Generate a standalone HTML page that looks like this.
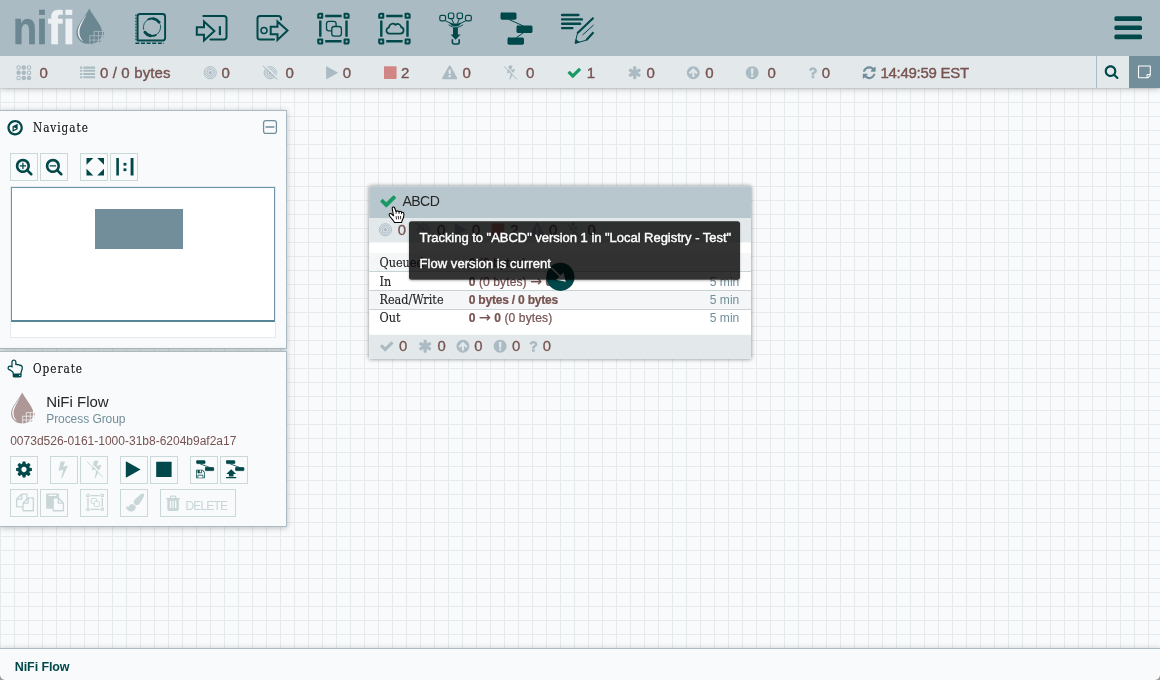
<!DOCTYPE html>
<html lang="en">
<head>
<meta charset="utf-8">
<title>NiFi Flow</title>
<style>
*{box-sizing:border-box;margin:0;padding:0}
html,body{width:1160px;height:680px;overflow:hidden}
body{position:relative;font-family:"Liberation Sans",sans-serif;background:#f9fafb;color:#262626;font-size:13px}
.abs{position:absolute}
#canvas{position:absolute;left:0;top:88px;width:1160px;height:592px;background-color:#f9fafb;
 background-image:linear-gradient(to right,#e5ebed 1px,transparent 1px),linear-gradient(to bottom,#e5ebed 1px,transparent 1px);
 background-size:14px 14px;background-position:0 0;overflow:hidden}
#header{position:absolute;left:0;top:0;width:1160px;height:56px;background:#aabbc3;z-index:6}
#status{position:absolute;left:0;top:56px;width:1160px;height:32px;background:#e3e8eb;box-shadow:0 1px 6px rgba(0,0,0,.25);z-index:5}
#status .v{position:absolute;top:0;height:32px;line-height:33px;font-size:15px;color:#775351;white-space:nowrap;-webkit-text-stroke:.38px #775351}
#status svg{position:absolute;overflow:visible}
#crumbs{position:absolute;left:0;top:648px;width:1160px;height:32px;background:rgba(249,250,251,.97);border-top:1px solid #aabbc3;box-shadow:0 1px 6px rgba(0,0,0,.25);z-index:5}
#crumbs span{position:absolute;left:14.800px;top:0;line-height:36px;font-size:12.500px;font-weight:bold;color:#004849;letter-spacing:-.1px;white-space:nowrap}
.panel{position:absolute;left:0;width:287px;background:rgba(249,250,251,.97);border:1px solid #aabbc3;border-left:none;box-shadow:0 1px 6px rgba(0,0,0,.25);z-index:4}
.ptitle{position:absolute;left:32px;font-family:"Liberation Serif","DejaVu Serif",serif;font-size:13px;color:#262626;letter-spacing:.6px}

.btn{position:absolute;width:28px;height:28px;border:1px solid #cbd8d8;background:rgba(249,250,251,1)}
.pt{position:absolute;left:32.700px;font-family:"DejaVu Serif","Liberation Serif",serif;font-size:12px;color:#262626;letter-spacing:1.100px;white-space:nowrap;line-height:14px;text-shadow:0 0 .5px rgba(38,38,38,.6);display:inline-block;transform:scale(.875,1);transform-origin:0 11.150px}
.psvg{position:absolute;left:0;top:0;overflow:visible}
.in{position:absolute;left:0;top:-1px;width:287px;height:100%}

#tip{position:absolute;left:409px;top:221.200px;width:331px;height:58.200px;z-index:8;color:#fff;font-size:13px;padding:9px 0 0 10.500px;-webkit-text-stroke:.4px #fff}
#tip div{height:25.600px;line-height:15px;white-space:nowrap;letter-spacing:-.03px}
#root{position:absolute;left:0;top:0;width:1160px;height:680px;will-change:transform}
</style>
</head>
<body><div id="root">
<div id="canvas"></div>
<svg id="pgsvg" class="abs" style="left:0;top:88px;z-index:1;overflow:hidden" width="1160" height="560" viewBox="0 88 1160 560">
<defs><filter id="ds" x="-10%" y="-10%" width="120%" height="125%"><feGaussianBlur in="SourceAlpha" stdDeviation="2.2"/><feOffset dx="0" dy=".45"/><feComponentTransfer><feFuncA type="linear" slope=".5"/></feComponentTransfer><feMerge><feMergeNode/><feMergeNode in="SourceGraphic"/></feMerge></filter></defs>
<g transform="translate(369.200 186.250) scale(1.00474 1.004)" font-family="Liberation Sans, sans-serif">
<rect x="0" y="0" width="380" height="172" fill="#ffffff" filter="url(#ds)"/>
<rect x="0" y="0" width="380" height="32" fill="#b8c6cd"/>
<rect x="0" y="32" width="380" height="24" fill="#e3e8eb"/>
<rect x="0" y="66.300" width="380" height="18.500" fill="#f4f6f7"/><rect x="0" y="104.330" width="380" height="18.300" fill="#f4f6f7"/>
<rect x="0" y="84.410" width="380" height=".996" fill="#c7d2d7"/><rect x="0" y="103.340" width="380" height=".996" fill="#c7d2d7"/><rect x="0" y="122.260" width="380" height=".996" fill="#c7d2d7"/>
<rect x="0" y="148" width="380" height="24" fill="#e3e8eb"/>
<g fill="#1a9964"><path d="M26.59 11.5C26.59 11.25 26.49 11 26.31 10.82L24.95 9.47C24.77 9.29 24.52 9.19 24.27 9.19C24.02 9.19 23.77 9.29 23.59 9.47L17.04 16.03L14.11 13.08C13.93 12.9 13.68 12.8 13.43 12.8C13.18 12.8 12.93 12.9 12.75 13.08L11.39 14.44C11.21 14.62 11.11 14.87 11.11 15.12C11.11 15.37 11.21 15.62 11.39 15.8L15 19.42L16.36 20.77C16.54 20.95 16.79 21.05 17.04 21.05C17.29 21.05 17.54 20.95 17.72 20.77L19.08 19.42L26.31 12.18C26.49 12 26.59 11.75 26.59 11.5Z"/></g>
<text x="33.200" y="20" font-size="14" fill="#262626" letter-spacing="-.6">ABCD</text>
<!-- contents -->
<g fill="none" stroke="#a3b6bf" stroke-width=".8"><circle cx="16.100" cy="43.400" r="6.100"/><circle cx="16.100" cy="43.400" r="4.600"/><circle cx="16.100" cy="43.400" r="3.100"/><circle cx="53.900" cy="43.400" r="6.100"/><circle cx="53.900" cy="43.400" r="4.600"/><circle cx="53.900" cy="43.400" r="3.100"/><path d="M46.400 36.600L60.800 50.200" stroke-width="1"/></g>
<g fill="#aabbc3"><circle cx="16.100" cy="43.400" r="1.750"/><circle cx="53.900" cy="43.400" r="1.750"/>
<path d="M96.8 43.66C97.05 43.52 97.05 43.28 96.8 43.14L85.68 36.96C85.42 36.82 85.21 36.95 85.21 37.24L85.21 49.56C85.21 49.85 85.42 49.98 85.68 49.84Z"/><path d="M168.27 47.65C168.27 47.8 168.15 47.92 168 47.92L166.4 47.92C166.25 47.92 166.13 47.8 166.13 47.65L166.13 46.05C166.13 45.9 166.25 45.78 166.4 45.78L168 45.78C168.15 45.78 168.27 45.9 168.27 46.05L168.27 47.65ZM168.25 44.51C168.25 44.62 168.12 44.71 167.97 44.71L166.42 44.71C166.26 44.71 166.14 44.62 166.14 44.51L165.99 40.69C165.99 40.64 166.02 40.56 166.08 40.51C166.13 40.47 166.2 40.42 166.28 40.42L168.12 40.42C168.2 40.42 168.27 40.47 168.32 40.51C168.38 40.56 168.41 40.62 168.41 40.67ZM168.14 36.7C167.95 36.35 167.59 36.14 167.2 36.14C166.81 36.14 166.45 36.35 166.26 36.7L159.83 48.48C159.65 48.81 159.66 49.21 159.85 49.54C160.04 49.86 160.39 50.06 160.77 50.06L173.63 50.06C174.01 50.06 174.36 49.86 174.55 49.54C174.74 49.21 174.75 48.81 174.57 48.48Z"/>
<path d="M207.38 39.89C207.3 39.81 207.2 39.76 207.09 39.76C207.05 39.76 207.02 39.77 206.98 39.78L203.56 40.63L205.04 36.62C205.06 36.57 205.08 36.52 205.08 36.47C205.08 36.27 204.91 36.1 204.69 36.1L204.69 36.1L201.85 36.1C201.67 36.1 201.52 36.22 201.47 36.38L199.73 43.52C199.71 43.64 199.74 43.77 199.85 43.85C199.92 43.91 200.02 43.95 200.12 43.95C200.15 43.95 200.18 43.95 200.22 43.94L203.73 43.07L202.03 50.06C201.98 50.24 202.1 50.42 202.29 50.48C202.33 50.49 202.37 50.5 202.41 50.5C202.56 50.5 202.7 50.41 202.77 50.28L207.44 40.27C207.5 40.14 207.48 40 207.38 39.89Z"/><path d="M197.700 36.100L210.600 49.300" stroke="#e3e8eb" stroke-width="1.300" fill="none"/><path d="M196.700 37L209.600 50.200" stroke="#aabbc3" stroke-width="1" fill="none"/>
</g>
<rect x="122" y="37.100" width="12.400" height="12.600" rx=".8" fill="#d18686"/>
<g font-size="14.800" fill="#775351" stroke="#775351" stroke-width=".3">
<text x="28.400" y="48.700">0</text><text x="67.400" y="48.700">0</text><text x="102.300" y="48.700">0</text><text x="140.300" y="48.700">2</text><text x="178.900" y="48.700">0</text><text x="217.400" y="48.700">0</text>
<text x="29.700" y="164.200">0</text><text x="68" y="164.200">0</text><text x="104.600" y="164.200">0</text><text x="142.100" y="164.200">0</text><text x="172.800" y="164.200">0</text>
</g>
<g fill="#aabbc3"><path d="M23.94 156.47C23.94 156.26 23.85 156.05 23.7 155.9L22.56 154.76C22.41 154.61 22.2 154.53 22 154.53C21.79 154.53 21.58 154.61 21.43 154.76L15.93 160.26L13.47 157.79C13.32 157.64 13.11 157.56 12.9 157.56C12.7 157.56 12.49 157.64 12.34 157.79L11.2 158.93C11.05 159.08 10.96 159.29 10.96 159.5C10.96 159.71 11.05 159.92 11.2 160.07L14.23 163.1L15.37 164.24C15.52 164.39 15.73 164.47 15.93 164.47C16.14 164.47 16.35 164.39 16.5 164.24L17.64 163.1L23.7 157.04C23.85 156.89 23.94 156.68 23.94 156.47Z"/><path d="M61.14 160.69L58.91 159.4L61.14 158.11C61.65 157.82 61.83 157.16 61.53 156.65L61 155.73C60.71 155.21 60.04 155.04 59.53 155.33L57.31 156.61L57.31 154.04C57.31 153.46 56.82 152.97 56.24 152.97L55.16 152.97C54.58 152.97 54.09 153.46 54.09 154.04L54.09 156.61L51.87 155.33C51.36 155.04 50.69 155.21 50.4 155.73L49.87 156.65C49.57 157.16 49.75 157.82 50.26 158.11L52.49 159.4L50.26 160.69C49.75 160.98 49.57 161.64 49.87 162.15L50.4 163.07C50.69 163.59 51.36 163.76 51.87 163.47L54.09 162.19L54.09 164.76C54.09 165.34 54.58 165.83 55.16 165.83L56.24 165.83C56.82 165.83 57.31 165.34 57.31 164.76L57.31 162.19L59.53 163.47C60.04 163.76 60.71 163.59 61 163.07L61.53 162.15C61.83 161.64 61.65 160.98 61.14 160.69Z"/><path d="M97.62 159.39C97.62 159.53 97.57 159.67 97.47 159.77L96.71 160.53C96.61 160.63 96.47 160.69 96.33 160.69C96.19 160.69 96.05 160.63 95.95 160.53L94.37 158.95L94.37 163.15C94.37 163.44 94.13 163.69 93.84 163.69L92.76 163.69C92.47 163.69 92.23 163.44 92.23 163.15L92.23 158.95L90.65 160.53C90.55 160.63 90.41 160.68 90.27 160.68C90.13 160.68 89.99 160.63 89.89 160.53L89.13 159.77C89.03 159.67 88.98 159.53 88.98 159.39C88.98 159.25 89.03 159.12 89.13 159.01L92.16 155.98L92.92 155.22C93.02 155.12 93.16 155.07 93.3 155.07C93.44 155.07 93.58 155.12 93.68 155.22L94.44 155.98L97.47 159.01C97.57 159.12 97.62 159.25 97.62 159.39ZM99.73 159.4C99.73 155.85 96.85 152.97 93.3 152.97C89.75 152.97 86.87 155.85 86.87 159.4C86.87 162.95 89.75 165.83 93.3 165.83C96.85 165.83 99.73 162.95 99.73 159.4Z"/><path d="M130.3 152.97C126.75 152.97 123.87 155.85 123.87 159.4C123.87 162.95 126.75 165.83 130.3 165.83C133.85 165.83 136.73 162.95 136.73 159.4C136.73 155.85 133.85 152.97 130.3 152.97ZM131.37 163.41C131.37 163.56 131.25 163.69 131.11 163.69L129.5 163.69C129.35 163.69 129.23 163.56 129.23 163.41L129.23 161.82C129.23 161.67 129.35 161.54 129.5 161.54L131.11 161.54C131.25 161.54 131.37 161.67 131.37 161.82ZM131.35 160.53C131.35 160.65 131.22 160.74 131.07 160.74L129.52 160.74C129.36 160.74 129.24 160.65 129.24 160.53L129.09 155.33C129.09 155.27 129.12 155.21 129.18 155.18C129.23 155.14 129.3 155.11 129.38 155.11L131.22 155.11C131.3 155.11 131.37 155.14 131.42 155.18C131.48 155.21 131.51 155.27 131.51 155.33Z"/><path d="M164.75 162.57C164.75 162.39 164.59 162.23 164.41 162.23L162.36 162.23C162.17 162.23 162.02 162.39 162.02 162.57L162.02 164.62C162.02 164.81 162.17 164.96 162.36 164.96L164.41 164.96C164.59 164.96 164.75 164.81 164.75 164.62ZM167.45 157.45C167.45 155.5 165.4 154.04 163.57 154.04C161.83 154.04 160.53 154.78 159.61 156.31C159.51 156.46 159.55 156.65 159.69 156.76L161.09 157.83C161.16 157.87 161.23 157.89 161.31 157.89C161.4 157.89 161.5 157.84 161.57 157.76C162.07 157.13 162.28 156.92 162.48 156.78C162.67 156.65 163.02 156.53 163.41 156.53C164.1 156.53 164.72 156.96 164.72 157.43C164.72 157.98 164.45 158.26 163.79 158.56C163.04 158.9 162.02 159.79 162.02 160.82L162.02 161.21C162.02 161.4 162.13 161.69 162.32 161.69L164.37 161.69C164.57 161.69 164.71 161.46 164.71 161.28L164.71 161.28C164.71 161.03 165.03 160.44 165.53 160.15C166.34 159.7 167.45 159.07 167.45 157.45Z"/></g>
<!-- stats -->
<g font-family="DejaVu Serif, Liberation Serif, serif" font-size="12" fill="#262626" stroke="#262626" stroke-width=".15" transform="scale(.935 1)">
<text x="10.900" y="80.600">Queued</text><text x="10.900" y="99.600">In</text><text x="10.900" y="117.600">Read/Write</text><text x="10.900" y="135.600">Out</text></g>
<g font-size="12" fill="#775351" stroke="#775351" stroke-width=".22">
<text x="99" y="80" letter-spacing=".1"><tspan font-weight="bold">0</tspan> (0 bytes)</text>
<text x="99" y="99" letter-spacing=".1"><tspan font-weight="bold">0</tspan> (0 bytes) <tspan font-family="DejaVu Sans, sans-serif" font-size="14">→</tspan> <tspan font-weight="bold">0</tspan></text>
<text x="99" y="117" font-weight="bold" letter-spacing="-.22">0 bytes / 0 bytes</text>
<text x="99" y="135" letter-spacing=".1"><tspan font-weight="bold">0 </tspan><tspan font-family="DejaVu Sans, sans-serif" font-size="14">→</tspan><tspan font-weight="bold"> 0</tspan> (0 bytes)</text>
</g>
<g font-size="12" fill="#728e9b"><text x="339" y="99">5 min</text><text x="339" y="117">5 min</text><text x="339" y="135">5 min</text></g>
</g>
<!-- connect handle -->
<circle cx="560.400" cy="276.900" r="14.100" fill="#004849"/>
<path d="M551.500 267.900L560.600 276.600" stroke="#ffffff" stroke-width="1.500" fill="none"/><path d="M563.400 272.500L565.800 281.800L556.200 279.800Z" fill="#ffffff"/>
</svg>
<svg class="abs" style="left:0;top:0;z-index:7;overflow:visible" width="1160" height="680"><defs><filter id="ts" x="-5%" y="-10%" width="110%" height="130%"><feGaussianBlur in="SourceAlpha" stdDeviation="1.2"/><feOffset dy="1"/><feComponentTransfer><feFuncA type="linear" slope=".3"/></feComponentTransfer><feComposite in2="SourceAlpha" operator="out"/></filter></defs><rect x="409" y="221.200" width="331" height="58.500" rx="2.500" fill="#000" filter="url(#ts)"/><rect x="409" y="221.200" width="331" height="58.500" rx="2.500" fill="rgba(0,0,0,.8)"/></svg>
<div id="tip"><div>Tracking to "ABCD" version 1 in "Local Registry - Test"</div><div style="letter-spacing:.06px">Flow version is current</div></div>
<svg class="abs" style="left:386px;top:203px;z-index:9;overflow:visible" width="22" height="24" viewBox="386 203 22 24">
<path d="M393.300 207.100Q394.300 207 394.700 208L396 211.500Q397.300 210.300 398.600 211.300L399 212Q400.200 210.700 401.200 211.700L401.500 212.600Q403 211.800 403.800 213.200Q404.200 214.500 403.400 217.800Q402.600 219.800 402.100 220.600L401.700 222.400L394.500 222.600Q393.800 221.300 392.900 220.200L390 216.500Q388.600 214.800 389.300 213.900Q390.200 213 391.400 213.800L393.500 215.800L392.200 208.400Q392.100 207.300 393.300 207.100Z" fill="#ffffff" stroke="#000000" stroke-width="1.050" stroke-linejoin="round"/>
<path d="M396 211.500l.2 2.200M399 212l.1 1.900M401.500 212.600v1.600M396.100 216.100l.4 3.300M398.300 216l.3 3.300M400.500 215.900l.2 3.300" stroke="#000000" stroke-width=".8" fill="none"/>
</svg>
<div id="header">
<svg class="abs" style="left:0;top:0" width="120" height="56" viewBox="0 0 120 56">
 <text transform="scale(.84 1)" x="15.355 43.510" y="44" font-family="Liberation Sans, sans-serif" font-weight="bold" font-size="47" fill="#6b8791" stroke="#6b8791" stroke-width=".6">ni</text>
 <text transform="scale(.95 1)" x="49.990 65.930" y="44" font-family="Liberation Sans, sans-serif" font-weight="bold" font-size="47" fill="#eef1f3" stroke="#eef1f3" stroke-width=".5">fi</text>
 <defs><g id="drop">
 <path d="M89.300 8.600C86 15.500 77.300 24.500 76.500 31.500C75.800 38.800 81.500 44.100 89.300 44.100C97 44.100 102.800 38.800 102.100 31.500C101.300 24.500 92.600 15.500 89.300 8.600Z" fill="currentColor"/>
 <path d="M103 31.800l1 .2l-.3 3.300H103zM103 36.200h.6l-.6 2.400zM99 40.500h2.600l-2.600 2.300z" fill="currentColor"/>
 <path d="M86.800 14.300C81.500 21.500 77.600 27 77.800 32.500C78 36.800 80 39.800 83.200 41.500C80.300 38.200 79.200 35.200 79.400 31.600C79.700 26.500 83.200 21 86.800 14.300Z" style="fill:var(--dhl)"/>
 <path d="M94.050 31.400V45M98.500 31.400V45M89.800 35.750V45M102.650 31V41M94 31.400H104M89.400 35.750H104M89.400 40.050H103" style="stroke:var(--dbg)" stroke-width=".8" fill="none"/>
 </g></defs>
 <use href="#drop" style="color:#6b8791;--dhl:#eef1f3;--dbg:#aabbc3"/>
</svg>
<svg class="abs" style="left:0;top:0;overflow:visible" width="1160" height="56" viewBox="0 0 1160 56" fill="none" stroke="#004849" stroke-linecap="round" stroke-linejoin="round">
<!-- processor -->
<g id="i-proc">
 <path d="M140 14h22.600a2.500 2.500 0 0 1 2.500 2.500v21.500a2.500 2.500 0 0 1-2.500 2.500H137.600V16.400a2.400 2.400 0 0 1 2.400-2.400z" stroke-width="1.900"/>
 <path d="M136 14.600v27" stroke-width="1.200" stroke-dasharray="1.700 1.300" stroke-linecap="butt"/>
 <path d="M135.400 43.200h28.500" stroke-width="1.500" stroke-dasharray="4 1.600" stroke-linecap="butt"/>
 <path d="M143.60 29.45A8.7 8.7 0 0 1 149.02 19.02" stroke-width="0.8"/>
 <path d="M148.32 19.32A8.7 8.7 0 0 1 154.25 18.80" stroke-width="1.8"/>
 <path d="M153.51 18.63A8.7 8.7 0 0 1 159.13 22.21" stroke-width="2.9"/>
 <path d="M160.40 24.95A8.7 8.7 0 0 1 154.98 35.38" stroke-width="0.8"/>
 <path d="M155.68 35.08A8.7 8.7 0 0 1 149.75 35.60" stroke-width="1.8"/>
 <path d="M150.49 35.77A8.7 8.7 0 0 1 144.87 32.19" stroke-width="2.9"/>
</g>
<!-- input port -->
<g stroke-width="2">
 <path d="M203.300 16h20.800a2.400 2.400 0 0 1 2.400 2.400v18.700a2.400 2.400 0 0 1-2.400 2.400H210.500" />
 <path d="M204 21.500v5.800h-7.200v7.400h7.200v5.800l10.400-9.500z" stroke-linejoin="miter"/>
 <path d="M219.900 26.200v8.900" stroke-linecap="butt" stroke-width="2.200"/>
</g>
<!-- output port -->
<g stroke-width="2">
 <path d="M274 39.500H260a2.500 2.500 0 0 1-2.500-2.500V18.500a2.500 2.500 0 0 1 2.500-2.500h18.500a2.500 2.500 0 0 1 2.500 2.500V19.500"/>
 <path d="M277.500 21.500v5.300h-6.800v7.400h6.800v5.800l10-9.500z" stroke-linejoin="miter"/>
 <circle cx="264" cy="30.500" r="3" stroke-width="1.500"/>
</g>
<!-- process group -->
<g id="pgframe" stroke-linecap="butt">
 <path d="M325.200 16h16.400M325.200 41.300h16.400M320.300 20.400v16.400M346.500 20.400v16.400" stroke-width="2.400"/>
 <path d="M318.200 15.200a1.500 1.500 0 0 1 1.500-1.500h2.500v4h-4zM348.600 15.200a1.500 1.500 0 0 0-1.500-1.500h-2.500v4h4zM318.200 42a1.500 1.500 0 0 0 1.500 1.500h2.500v-4h-4zM348.600 42a1.500 1.500 0 0 1-1.500 1.500h-2.500v-4h4z" stroke-width="2.100"/>
</g>
<rect x="326.500" y="21.300" width="9.600" height="9.600" rx="2.400" stroke-width="1.300"/>
<rect x="331.800" y="26.500" width="9.600" height="9.600" rx="2.400" stroke-width="1.300" fill="#aabbc3"/>
<!-- remote process group -->
<use href="#pgframe" x="61"/>
<path d="M389 33.600h11.500a3.300 3.300 0 0 0 .6-6.500a3.300 3.300 0 0 0-5.600-2.200a3.800 3.800 0 0 0-6.500 2.600a3.100 3.100 0 0 0 0 6.100z" stroke-width="1.700"/>
<!-- funnel -->
<g stroke-width="1.200">
 <rect x="439.800" y="15.400" width="5.800" height="5.500" rx="1.600"/><rect x="448.400" y="13" width="5.400" height="5.600" rx="1.600"/><rect x="457.100" y="13" width="5.400" height="5.600" rx="1.600"/><rect x="465.500" y="15.400" width="5.800" height="5.500" rx="1.600"/>
 <path d="M445.800 21l5.700 2.700M451.600 19l2 4M459.300 19l-1.700 4M465.400 21l-5.600 2.700" stroke-width="1"/>
 <path d="M448.900 25q6.700 5.400 13.900 0" stroke-width=".9"/>
</g>
<path d="M450.200 23.100q5.200 1.500 10.400 0q-.6 3.200-5.200 3.200q-4.600 0-5.200-3.200z" fill="#004849" stroke-width=".4"/>
<path d="M453 27.700h4.900v6.900h2.700l-5 5.200l-5-5.200h2.400z" fill="#004849" stroke="none"/>
<path d="M452.400 39.300v3a1.700 1.700 0 0 0 1.700 1.700h3.400a1.700 1.700 0 0 0 1.700-1.700v-3" stroke-width="1.600" stroke-linecap="butt"/>
<!-- template -->
<g fill="#004849" stroke-width="1">
 <rect x="501" y="13" width="15" height="6.200" rx=".7"/><rect x="517" y="26" width="15" height="6.500" rx=".7"/><rect x="508" y="38" width="15.500" height="6.200" rx=".7"/>
 <path d="M509 19.500l14 6.300M523 33l-7 5"/>
</g>
<!-- label -->
<g stroke-width="2.400">
 <path d="M562.100 15h16.300M562.100 19.400h19.800M562.100 23.700h18M562.100 28.100h10.300"/>
</g>
<g stroke-linecap="butt">
 <path d="M577.300 33.300L593.500 17.700" stroke-width="2.100"/><path d="M582.600 35L593.500 25" stroke-width="1"/><path d="M586.200 40.300L593.500 32.300" stroke-width="2.100"/>
 <path d="M577.500 33l-2.400 10.200l11-2.900" stroke-width="1"/><path d="M576 39.500l3.500 2.800l-4.400 1.100z" fill="#004849" stroke-width=".5"/>
</g>
<!-- hamburger -->
<g fill="#004849" stroke="none"><rect x="1114.400" y="16.300" width="27.600" height="4.700" rx="1.600"/><rect x="1114.400" y="25.400" width="27.600" height="4.700" rx="1.600"/><rect x="1114.400" y="34.600" width="27.600" height="4.700" rx="1.600"/></g>
</svg>
</div>
<div id="status">
<svg style="left:0;top:0" width="1160" height="32" viewBox="0 56 1160 32" fill="#aabbc3">
<!-- threads -->
<g stroke="#a9bac2" stroke-width="1.050"><circle cx="18.6" cy="67.5" r="1.750" fill="none"/><circle cx="23.8" cy="67.5" r="2.250" stroke="none"/><circle cx="29.0" cy="67.5" r="1.750" fill="none"/><circle cx="18.6" cy="72.7" r="2.250" stroke="none"/><circle cx="23.8" cy="72.7" r="2.250" stroke="none"/><circle cx="29.0" cy="72.7" r="1.750" fill="none"/><circle cx="18.6" cy="77.9" r="1.750" fill="none"/><circle cx="23.8" cy="77.9" r="2.250" stroke="none"/><circle cx="29.0" cy="77.9" r="2.250" stroke="none"/></g>
<path d="M82.24 76.42C82.24 76.28 82.12 76.15 81.97 76.15L80.37 76.15C80.23 76.15 80.1 76.28 80.1 76.42L80.1 78.03C80.1 78.17 80.23 78.29 80.37 78.29L81.97 78.29C82.12 78.29 82.24 78.17 82.24 78.03ZM82.24 73.2C82.24 73.06 82.12 72.94 81.97 72.94L80.37 72.94C80.23 72.94 80.1 73.06 80.1 73.2L80.1 74.81C80.1 74.95 80.23 75.08 80.37 75.08L81.97 75.08C82.12 75.08 82.24 74.95 82.24 74.81ZM82.24 69.99C82.24 69.85 82.12 69.72 81.97 69.72L80.37 69.72C80.23 69.72 80.1 69.85 80.1 69.99L80.1 71.6C80.1 71.74 80.23 71.86 80.37 71.86L81.97 71.86C82.12 71.86 82.24 71.74 82.24 71.6ZM95.1 76.42C95.1 76.28 94.97 76.15 94.83 76.15L83.58 76.15C83.44 76.15 83.31 76.28 83.31 76.42L83.31 78.03C83.31 78.17 83.44 78.29 83.58 78.29L94.83 78.29C94.97 78.29 95.1 78.17 95.1 78.03ZM82.24 66.78C82.24 66.63 82.12 66.51 81.97 66.51L80.37 66.51C80.23 66.51 80.1 66.63 80.1 66.78L80.1 68.38C80.1 68.52 80.23 68.65 80.37 68.65L81.97 68.65C82.12 68.65 82.24 68.52 82.24 68.38ZM95.1 73.2C95.1 73.06 94.97 72.94 94.83 72.94L83.58 72.94C83.44 72.94 83.31 73.06 83.31 73.2L83.31 74.81C83.31 74.95 83.44 75.08 83.58 75.08L94.83 75.08C94.97 75.08 95.1 74.95 95.1 74.81ZM95.1 69.99C95.1 69.85 94.97 69.72 94.83 69.72L83.58 69.72C83.44 69.72 83.31 69.85 83.31 69.99L83.31 71.6C83.31 71.74 83.44 71.86 83.58 71.86L94.83 71.86C94.97 71.86 95.1 71.74 95.1 71.6ZM95.1 66.78C95.1 66.63 94.97 66.51 94.83 66.51L83.58 66.51C83.44 66.51 83.31 66.63 83.31 66.78L83.31 68.38C83.31 68.52 83.44 68.65 83.58 68.65L94.83 68.65C94.97 68.65 95.1 68.52 95.1 68.38Z"/>
<!-- transmitting -->
<g fill="none" stroke="#a3b6bf" stroke-width=".8"><circle cx="210.200" cy="72.700" r="6.150"/><circle cx="210.200" cy="72.700" r="4.650"/><circle cx="210.200" cy="72.700" r="3.150"/></g><circle cx="210.200" cy="72.700" r="1.750"/>
<!-- not transmitting -->
<g fill="none" stroke="#a3b6bf" stroke-width=".8"><circle cx="270.300" cy="72.700" r="6.150"/><circle cx="270.300" cy="72.700" r="4.650"/><circle cx="270.300" cy="72.700" r="3.150"/></g><circle cx="270.300" cy="72.700" r="1.750"/>
<path d="M264.200 65.300L278.600 79" stroke="#e3e8eb" stroke-width="1.600" fill="none"/><path d="M263 65.900L277.400 79.600" stroke="#a3b6bf" stroke-width="1" fill="none"/>
<path d="M337.7 73.06C337.95 72.92 337.95 72.68 337.7 72.54L326.58 66.36C326.32 66.22 326.11 66.35 326.11 66.64L326.11 78.96C326.11 79.25 326.32 79.38 326.58 79.24Z"/>
<rect x="384" y="66.300" width="12.600" height="12.700" rx=".8" fill="#d18686"/>
<path d="M450.77 76.95C450.77 77.1 450.65 77.22 450.5 77.22L448.9 77.22C448.75 77.22 448.63 77.1 448.63 76.95L448.63 75.35C448.63 75.2 448.75 75.08 448.9 75.08L450.5 75.08C450.65 75.08 450.77 75.2 450.77 75.35L450.77 76.95ZM450.75 73.81C450.75 73.92 450.62 74.01 450.47 74.01L448.92 74.01C448.76 74.01 448.64 73.92 448.64 73.81L448.49 69.99C448.49 69.94 448.52 69.86 448.58 69.81C448.63 69.77 448.7 69.72 448.78 69.72L450.62 69.72C450.7 69.72 450.77 69.77 450.82 69.81C450.88 69.86 450.91 69.92 450.91 69.97ZM450.64 66C450.45 65.65 450.09 65.44 449.7 65.44C449.31 65.44 448.95 65.65 448.76 66L442.33 77.78C442.15 78.11 442.16 78.51 442.35 78.84C442.54 79.16 442.89 79.36 443.27 79.36L456.13 79.36C456.51 79.36 456.86 79.16 457.05 78.84C457.24 78.51 457.25 78.11 457.07 77.78Z"/>
<!-- disabled -->
<path d="M514.78 69.19C514.7 69.11 514.6 69.06 514.49 69.06C514.45 69.06 514.42 69.07 514.38 69.08L510.96 69.93L512.44 65.92C512.46 65.87 512.48 65.82 512.48 65.77C512.48 65.57 512.31 65.4 512.09 65.4L512.09 65.4L509.25 65.4C509.07 65.4 508.92 65.52 508.87 65.68L507.13 72.82C507.11 72.94 507.14 73.07 507.25 73.15C507.32 73.21 507.42 73.25 507.52 73.25C507.55 73.25 507.58 73.25 507.62 73.24L511.13 72.37L509.43 79.36C509.38 79.54 509.5 79.72 509.69 79.78C509.73 79.79 509.77 79.8 509.81 79.8C509.96 79.8 510.1 79.71 510.17 79.58L514.84 69.57C514.9 69.44 514.88 69.3 514.78 69.19Z"/><path d="M505.100 65.400L518 78.600" stroke="#e3e8eb" stroke-width="1.300" fill="none"/><path d="M504.100 66.300L517 79.500" stroke="#aabbc3" stroke-width="1" fill="none"/>
<g fill="#1a9964"><path d="M580.92 69.88C580.92 69.67 580.84 69.46 580.69 69.3L579.53 68.15C579.38 68 579.17 67.91 578.96 67.91C578.74 67.91 578.53 68 578.38 68.15L572.81 73.72L570.32 71.22C570.17 71.07 569.96 70.98 569.74 70.98C569.53 70.98 569.32 71.07 569.17 71.22L568.01 72.37C567.86 72.53 567.78 72.74 567.78 72.95C567.78 73.16 567.86 73.37 568.01 73.53L571.08 76.6L572.24 77.75C572.39 77.9 572.6 77.99 572.81 77.99C573.03 77.99 573.24 77.9 573.39 77.75L574.55 76.6L580.69 70.46C580.84 70.3 580.92 70.09 580.92 69.88Z"/></g>
<path d="M640.14 73.99L637.91 72.7L640.14 71.41C640.65 71.12 640.83 70.46 640.53 69.95L640 69.03C639.71 68.51 639.04 68.34 638.53 68.63L636.31 69.91L636.31 67.34C636.31 66.76 635.82 66.27 635.24 66.27L634.16 66.27C633.58 66.27 633.09 66.76 633.09 67.34L633.09 69.91L630.87 68.63C630.36 68.34 629.69 68.51 629.4 69.03L628.87 69.95C628.57 70.46 628.75 71.12 629.26 71.41L631.49 72.7L629.26 73.99C628.75 74.28 628.57 74.94 628.87 75.45L629.4 76.37C629.69 76.89 630.36 77.06 630.87 76.77L633.09 75.49L633.09 78.06C633.09 78.64 633.58 79.13 634.16 79.13L635.24 79.13C635.82 79.13 636.31 78.64 636.31 78.06L636.31 75.49L638.53 76.77C639.04 77.06 639.71 76.89 640 76.37L640.53 75.45C640.83 74.94 640.65 74.28 640.14 73.99Z"/>
<path d="M697.62 72.69C697.62 72.83 697.57 72.97 697.47 73.07L696.71 73.83C696.61 73.93 696.47 73.99 696.33 73.99C696.19 73.99 696.05 73.93 695.95 73.83L694.37 72.25L694.37 76.45C694.37 76.74 694.13 76.99 693.84 76.99L692.76 76.99C692.47 76.99 692.23 76.74 692.23 76.45L692.23 72.25L690.65 73.83C690.55 73.93 690.41 73.98 690.27 73.98C690.13 73.98 689.99 73.93 689.89 73.83L689.13 73.07C689.03 72.97 688.98 72.83 688.98 72.69C688.98 72.55 689.03 72.42 689.13 72.31L692.16 69.28L692.92 68.52C693.02 68.42 693.16 68.37 693.3 68.37C693.44 68.37 693.58 68.42 693.68 68.52L694.44 69.28L697.47 72.31C697.57 72.42 697.62 72.55 697.62 72.69ZM699.73 72.7C699.73 69.15 696.85 66.27 693.3 66.27C689.75 66.27 686.87 69.15 686.87 72.7C686.87 76.25 689.75 79.13 693.3 79.13C696.85 79.13 699.73 76.25 699.73 72.7Z"/>
<path d="M752.2 66.27C748.65 66.27 745.77 69.15 745.77 72.7C745.77 76.25 748.65 79.13 752.2 79.13C755.75 79.13 758.63 76.25 758.63 72.7C758.63 69.15 755.75 66.27 752.2 66.27ZM753.27 76.71C753.27 76.86 753.15 76.99 753.01 76.99L751.4 76.99C751.25 76.99 751.13 76.86 751.13 76.71L751.13 75.12C751.13 74.97 751.25 74.84 751.4 74.84L753.01 74.84C753.15 74.84 753.27 74.97 753.27 75.12ZM753.25 73.83C753.25 73.95 753.12 74.04 752.97 74.04L751.42 74.04C751.26 74.04 751.14 73.95 751.14 73.83L750.99 68.63C750.99 68.57 751.02 68.51 751.08 68.48C751.13 68.44 751.2 68.41 751.28 68.41L753.12 68.41C753.2 68.41 753.27 68.44 753.32 68.48C753.38 68.51 753.41 68.57 753.41 68.63Z"/>
<path d="M814.25 75.87C814.25 75.69 814.09 75.53 813.91 75.53L811.86 75.53C811.67 75.53 811.52 75.69 811.52 75.87L811.52 77.92C811.52 78.11 811.67 78.26 811.86 78.26L813.91 78.26C814.09 78.26 814.25 78.11 814.25 77.92ZM816.95 70.75C816.95 68.8 814.9 67.34 813.07 67.34C811.33 67.34 810.03 68.08 809.11 69.61C809.01 69.76 809.05 69.95 809.19 70.06L810.59 71.13C810.66 71.17 810.73 71.19 810.81 71.19C810.9 71.19 811 71.14 811.07 71.06C811.57 70.43 811.78 70.22 811.98 70.08C812.17 69.95 812.52 69.83 812.91 69.83C813.6 69.83 814.22 70.26 814.22 70.73C814.22 71.28 813.95 71.56 813.29 71.86C812.54 72.2 811.52 73.09 811.52 74.12L811.52 74.51C811.52 74.7 811.63 74.99 811.82 74.99L813.87 74.99C814.07 74.99 814.21 74.76 814.21 74.58L814.21 74.58C814.21 74.33 814.53 73.74 815.03 73.45C815.84 73 816.95 72.37 816.95 70.75Z"/>
<g fill="#728e9b"><path d="M875.42 74.04C875.42 73.9 875.3 73.77 875.15 73.77L873.54 73.77C873.42 73.77 873.34 73.85 873.29 73.96C873.15 74.3 873.05 74.62 872.85 74.94C872.07 76.22 870.69 76.99 869.2 76.99C868.12 76.99 867.07 76.57 866.29 75.83L867.43 74.68C867.53 74.58 867.59 74.45 867.59 74.31C867.59 74.01 867.35 73.77 867.06 73.77L863.31 73.77C863.01 73.77 862.77 74.01 862.77 74.31L862.77 78.06C862.77 78.35 863.01 78.59 863.31 78.59C863.45 78.59 863.58 78.53 863.68 78.43L864.76 77.35C865.95 78.48 867.53 79.13 869.17 79.13C872.26 79.13 874.7 77.06 875.41 74.1C875.42 74.08 875.42 74.06 875.42 74.04ZM875.63 67.34C875.63 67.05 875.39 66.81 875.09 66.81C874.95 66.81 874.82 66.87 874.72 66.97L873.63 68.05C872.44 66.92 870.84 66.27 869.2 66.27C866.11 66.27 863.64 68.33 862.92 71.3C862.92 71.32 862.92 71.34 862.92 71.36C862.92 71.5 863.04 71.63 863.19 71.63L864.86 71.63C864.98 71.63 865.06 71.55 865.11 71.44C865.25 71.1 865.35 70.78 865.55 70.46C866.33 69.18 867.71 68.41 869.2 68.41C870.28 68.41 871.33 68.82 872.12 69.56L870.97 70.72C870.87 70.82 870.81 70.95 870.81 71.09C870.81 71.39 871.05 71.63 871.34 71.63L875.09 71.63C875.39 71.63 875.63 71.39 875.63 71.09Z"/></g>
</svg>
<span class="v" style="left:39.400px">0</span>
<span class="v" style="left:99.900px;letter-spacing:.15px">0 / 0 bytes</span>
<span class="v" style="left:221.400px">0</span>
<span class="v" style="left:285.400px">0</span>
<span class="v" style="left:342.800px">0</span>
<span class="v" style="left:401.100px">2</span>
<span class="v" style="left:462.400px">0</span>
<span class="v" style="left:526.100px">0</span>
<span class="v" style="left:586.800px">1</span>
<span class="v" style="left:646.600px">0</span>
<span class="v" style="left:705.300px">0</span>
<span class="v" style="left:767.400px">0</span>
<span class="v" style="left:821.700px">0</span>
<span class="v" style="left:880.400px;letter-spacing:-.28px">14:49:59 EST</span>
<div class="abs" style="left:1096px;top:0;width:1px;height:32px;background:#aabbc3"></div>
<div class="abs" style="left:1128.500px;top:0;width:31.500px;height:32px;background:#728e9b"></div>
<svg style="left:0;top:0" width="1160" height="32" viewBox="0 56 1160 32">
<g fill="#004849"><path d="M1114.24 71.14C1114.24 73.18 1112.58 74.84 1110.54 74.84C1108.5 74.84 1106.84 73.18 1106.84 71.14C1106.84 69.1 1108.5 67.44 1110.54 67.44C1112.58 67.44 1114.24 69.1 1114.24 71.14ZM1118.47 78.01C1118.47 77.73 1118.36 77.46 1118.17 77.27L1115.33 74.44C1116 73.47 1116.36 72.32 1116.36 71.14C1116.36 67.93 1113.76 65.33 1110.54 65.33C1107.33 65.33 1104.73 67.93 1104.73 71.14C1104.73 74.36 1107.33 76.96 1110.54 76.96C1111.72 76.96 1112.87 76.6 1113.84 75.93L1116.67 78.76C1116.86 78.96 1117.13 79.07 1117.41 79.07C1117.99 79.07 1118.47 78.59 1118.47 78.01Z"/></g>
<g fill="#ffffff"><path d="M1149.69 75.11C1149.64 75.26 1149.56 75.4 1149.51 75.46L1147.96 77.01C1147.9 77.06 1147.76 77.14 1147.61 77.19L1147.61 75.11L1149.69 75.11ZM1147.35 74.04C1146.9 74.04 1146.54 74.4 1146.54 74.85L1146.54 77.26L1139.04 77.26L1139.04 66.54L1149.76 66.54L1149.76 74.04ZM1150.83 66.28C1150.83 65.83 1150.47 65.47 1150.03 65.47L1138.78 65.47C1138.33 65.47 1137.97 65.83 1137.97 66.28L1137.97 77.53C1137.97 77.97 1138.33 78.33 1138.78 78.33L1147.35 78.33C1147.79 78.33 1148.41 78.07 1148.72 77.76L1150.26 76.22C1150.57 75.91 1150.83 75.29 1150.83 74.85Z"/></g>
</svg>
</div>
<div class="panel" id="nav" style="top:110px;height:239px"><div class="in">
<span class="pt" style="top:11px">Navigate</span>
<div class="btn" style="left:10px;top:43px"></div><div class="btn" style="left:40px;top:43px"></div><div class="btn" style="left:80px;top:43px"></div><div class="btn" style="left:110px;top:43px"></div>
<div class="abs" style="left:10px;top:76px;width:266px;height:152px;background:#fff;border:1px solid #e5ebed"></div>
<div class="abs" style="left:11px;top:77px;width:264px;height:135px;background:#fff;border:1px solid #6f94a8;border-bottom:2px solid #598599"></div>
<div class="abs" style="left:95px;top:99px;width:87.500px;height:40px;background:#728e9b"></div>
<svg class="psvg" width="287" height="239" viewBox="0 110 287 239">
<g fill="#004849"><path d="M13.81 129.73L13.81 127.16L16.39 128.44ZM17.67 123.79L12.53 126.36L12.53 131.81L17.67 129.24ZM20.56 127.8C20.56 130.81 18.11 133.26 15.1 133.26C12.09 133.26 9.64 130.81 9.64 127.8C9.64 124.79 12.09 122.34 15.1 122.34C18.11 122.34 20.56 124.79 20.56 127.8ZM22.81 127.8C22.81 123.54 19.36 120.09 15.1 120.09C10.84 120.09 7.39 123.54 7.39 127.8C7.39 132.06 10.84 135.51 15.1 135.51C19.36 135.51 22.81 132.06 22.81 127.8Z"/><path d="M26.13 165.59C26.13 165.42 25.98 165.27 25.81 165.27L23.56 165.27L23.56 163.02C23.56 162.85 23.41 162.7 23.24 162.7L22.59 162.7C22.42 162.7 22.27 162.85 22.27 163.02L22.27 165.27L20.02 165.27C19.85 165.27 19.7 165.42 19.7 165.59L19.7 166.24C19.7 166.41 19.85 166.56 20.02 166.56L22.27 166.56L22.27 168.81C22.27 168.98 22.42 169.13 22.59 169.13L23.24 169.13C23.41 169.13 23.56 168.98 23.56 168.81L23.56 166.56L25.81 166.56C25.98 166.56 26.13 166.41 26.13 166.24ZM27.41 165.91C27.41 168.4 25.4 170.41 22.91 170.41C20.43 170.41 18.41 168.4 18.41 165.91C18.41 163.43 20.43 161.41 22.91 161.41C25.4 161.41 27.41 163.43 27.41 165.91ZM32.56 174.27C32.56 173.93 32.42 173.6 32.19 173.37L28.74 169.92C29.55 168.75 29.99 167.34 29.99 165.91C29.99 162.01 26.82 158.84 22.91 158.84C19.01 158.84 15.84 162.01 15.84 165.91C15.84 169.82 19.01 172.99 22.91 172.99C24.34 172.99 25.75 172.55 26.92 171.74L30.37 175.18C30.6 175.42 30.93 175.56 31.27 175.56C31.98 175.56 32.56 174.98 32.56 174.27Z"/><path d="M56.13 165.59C56.13 165.42 55.98 165.27 55.81 165.27L50.02 165.27C49.85 165.27 49.7 165.42 49.7 165.59L49.7 166.24C49.7 166.41 49.85 166.56 50.02 166.56L55.81 166.56C55.98 166.56 56.13 166.41 56.13 166.24ZM57.41 165.91C57.41 168.4 55.4 170.41 52.91 170.41C50.43 170.41 48.41 168.4 48.41 165.91C48.41 163.43 50.43 161.41 52.91 161.41C55.4 161.41 57.41 163.43 57.41 165.91ZM62.56 174.27C62.56 173.93 62.42 173.6 62.19 173.37L58.74 169.92C59.55 168.75 59.99 167.34 59.99 165.91C59.99 162.01 56.82 158.84 52.91 158.84C49.01 158.84 45.84 162.01 45.84 165.91C45.84 169.82 49.01 172.99 52.91 172.99C54.34 172.99 55.75 172.55 56.92 171.74L60.37 175.18C60.6 175.42 60.93 175.56 61.27 175.56C61.98 175.56 62.56 174.98 62.56 174.27Z"/><path d="M86.500 158h6.800l-6.800 6.800zM104 158v6.800l-6.800-6.800zM86.500 175.500v-6.800l6.800 6.800zM104 175.500h-6.800l6.800-6.800z"/>
<rect x="116.300" y="158" width="2.600" height="17.500"/><rect x="130.600" y="158" width="2.900" height="17.500"/><rect x="123.500" y="162.900" width="2.900" height="2.700"/><rect x="123.500" y="168.400" width="2.900" height="2.700"/></g>
<g fill="#728e9b"><path d="M274.5 126.68C274.5 126.5 274.36 126.36 274.18 126.36L265.82 126.36C265.64 126.36 265.5 126.5 265.5 126.68L265.5 127.32C265.5 127.5 265.64 127.64 265.82 127.64L274.18 127.64C274.36 127.64 274.5 127.5 274.5 127.32ZM275.79 131.18C275.79 132.06 275.06 132.79 274.18 132.79L265.82 132.79C264.94 132.79 264.21 132.06 264.21 131.18L264.21 122.82C264.21 121.94 264.94 121.21 265.82 121.21L274.18 121.21C275.06 121.21 275.79 121.94 275.79 122.82L275.79 131.18ZM277.07 122.82C277.07 121.22 275.78 119.93 274.18 119.93L265.82 119.93C264.22 119.93 262.93 121.22 262.93 122.82L262.93 131.18C262.93 132.78 264.22 134.07 265.82 134.07L274.18 134.07C275.78 134.07 277.07 132.78 277.07 131.18Z"/></g>
</svg>
</div></div>
<div class="panel" id="op" style="top:351px;height:176px"><div class="in">
<span class="pt" style="top:11px">Operate</span>
<span class="abs" style="left:46.200px;top:41.500px;font-size:15px;line-height:17px;color:#262626;white-space:nowrap">NiFi Flow</span>
<span class="abs" style="left:46.200px;top:60.500px;font-size:12px;line-height:14px;color:#728e9b;white-space:nowrap;letter-spacing:-.06px">Process Group</span>
<span class="abs" style="left:10.200px;top:82.500px;font-size:12px;line-height:14px;color:#775351;white-space:nowrap">0073d526-0161-1000-31b8-6204b9af2a17</span>
<div class="btn" style="left:10px;top:105px"></div><div class="btn" style="left:50px;top:105px"></div><div class="btn" style="left:80px;top:105px"></div><div class="btn" style="left:120px;top:105px"></div><div class="btn" style="left:150px;top:105px"></div><div class="btn" style="left:190px;top:105px"></div><div class="btn" style="left:220px;top:105px"></div>
<div class="btn" style="left:10px;top:138px"></div><div class="btn" style="left:40px;top:138px"></div><div class="btn" style="left:80px;top:138px"></div><div class="btn" style="left:120px;top:138px"></div><div class="btn" style="left:160px;top:138px;width:76px"></div>
<span class="abs" style="left:185.500px;top:147.600px;font-size:12px;line-height:14px;color:#c8d6d7;white-space:nowrap;letter-spacing:-.85px">DELETE</span>
<svg class="psvg" width="287" height="176" viewBox="0 351 287 176">
<g fill="#004849"><path d="M20.34 375.47C20.34 375.82 20.05 376.11 19.7 376.11C19.35 376.11 19.06 375.82 19.06 375.47C19.06 375.12 19.35 374.83 19.7 374.83C20.05 374.83 20.34 375.12 20.34 375.47ZM21.63 367.8C21.63 369.75 20.34 371.46 20.34 373.22L20.34 373.54L13.91 373.54L13.91 373.22C13.91 372.16 13.01 371.44 12.28 370.8C11.81 370.39 11.35 370.01 10.82 369.68C10.61 369.55 10.39 369.42 10.17 369.3C9.94 369.19 8.77 368.68 8.77 368.4C8.77 367.55 9.09 366.79 10.06 366.79C11.34 366.79 12 367.76 12.63 367.76L12.63 361.97C12.63 361.3 13.23 360.69 13.91 360.69C14.61 360.69 15.2 361.28 15.2 361.97L15.2 365.3C15.44 365.09 15.91 364.94 16.23 364.94C16.71 364.94 17.11 365.14 17.43 365.48C17.64 365.36 17.88 365.3 18.12 365.3C18.59 365.3 19.16 365.53 19.39 365.95C19.57 365.92 19.76 365.9 19.95 365.9C21.17 365.9 21.63 366.66 21.63 367.8ZM22.91 367.75C22.91 365.89 21.8 364.59 19.9 364.61C19.4 364.22 18.76 364.01 18.11 364.01C17.97 364.01 17.82 364.02 17.68 364.04C17.31 363.83 16.91 363.7 16.49 363.67L16.49 361.97C16.49 360.57 15.31 359.4 13.9 359.4C12.52 359.4 11.34 360.59 11.34 361.97L11.34 365.73C10.93 365.58 10.5 365.51 10.06 365.51C8.36 365.51 7.49 366.8 7.49 368.4C7.49 369.75 9.2 370.18 10.14 370.76C10.61 371.06 11.02 371.4 11.43 371.76C11.76 372.06 12.63 372.74 12.63 373.22L12.63 376.11C12.63 376.83 13.2 377.4 13.91 377.4L20.34 377.4C21.06 377.4 21.63 376.83 21.63 376.11L21.63 373.22C21.63 372.59 22 371.59 22.22 370.98C22.6 369.94 22.91 368.87 22.91 367.75Z"/><path d="M26.63 469.5C26.63 470.95 25.45 472.13 24 472.13C22.55 472.13 21.37 470.95 21.37 469.5C21.37 468.05 22.55 466.87 24 466.87C25.45 466.87 26.63 468.05 26.63 469.5ZM31.89 468.38C31.89 468.21 31.76 468.04 31.59 468.01L29.71 467.72C29.61 467.38 29.46 467.05 29.29 466.72C29.64 466.23 30.02 465.78 30.37 465.31C30.42 465.24 30.45 465.17 30.45 465.07C30.45 464.99 30.43 464.91 30.38 464.85C29.95 464.24 29.23 463.61 28.68 463.1C28.61 463.04 28.52 463 28.43 463C28.33 463 28.24 463.03 28.18 463.09L26.72 464.19C26.42 464.04 26.12 463.91 25.8 463.81L25.51 461.92C25.49 461.75 25.32 461.61 25.14 461.61L22.86 461.61C22.68 461.61 22.53 461.74 22.49 461.9C22.33 462.52 22.26 463.19 22.19 463.81C21.87 463.91 21.56 464.05 21.26 464.2L19.84 463.1C19.76 463.04 19.67 463 19.57 463C19.23 463 17.84 464.5 17.59 464.84C17.54 464.91 17.5 464.98 17.5 465.07C17.5 465.17 17.54 465.25 17.6 465.32C17.98 465.78 18.35 466.25 18.7 466.74C18.54 467.05 18.4 467.35 18.3 467.68L16.39 467.97C16.24 468 16.11 468.19 16.11 468.34L16.11 470.62C16.11 470.79 16.24 470.96 16.41 470.99L18.29 471.27C18.39 471.62 18.54 471.95 18.71 472.28C18.36 472.77 17.98 473.22 17.63 473.69C17.58 473.76 17.55 473.83 17.55 473.93C17.55 474.01 17.57 474.09 17.62 474.16C18.05 474.76 18.77 475.39 19.32 475.89C19.39 475.96 19.48 476 19.57 476C19.67 476 19.76 475.97 19.83 475.91L21.28 474.81C21.58 474.96 21.88 475.09 22.2 475.19L22.49 477.08C22.51 477.25 22.68 477.39 22.86 477.39L25.14 477.39C25.32 477.39 25.47 477.26 25.51 477.1C25.67 476.48 25.74 475.81 25.81 475.19C26.13 475.09 26.44 474.95 26.74 474.8L28.16 475.91C28.24 475.96 28.33 476 28.43 476C28.77 476 30.16 474.49 30.41 474.16C30.47 474.09 30.5 474.02 30.5 473.93C30.5 473.83 30.46 473.74 30.4 473.67C30.02 473.21 29.65 472.75 29.3 472.25C29.46 471.95 29.59 471.65 29.7 471.32L31.6 471.03C31.76 471 31.89 470.81 31.89 470.66Z"/><path d="M140.12 469.82C140.44 469.64 140.44 469.36 140.12 469.18L126.41 461.56C126.09 461.39 125.84 461.54 125.84 461.9L125.84 477.1C125.84 477.46 126.09 477.61 126.41 477.44Z"/><path d="M171.61 462.33C171.61 461.98 171.32 461.69 170.97 461.69L156.83 461.69C156.48 461.69 156.19 461.98 156.19 462.33L156.19 476.47C156.19 476.82 156.48 477.11 156.83 477.11L170.97 477.11C171.32 477.11 171.61 476.82 171.61 476.47Z"/></g>
<g fill="#c8d6d7"><path d="M67.49 465.94C67.4 465.85 67.28 465.79 67.15 465.79C67.11 465.79 67.07 465.8 67.03 465.81L63.05 466.8L64.77 462.15C64.8 462.09 64.82 462.02 64.82 461.96C64.82 461.73 64.62 461.54 64.37 461.54L64.37 461.54L61.07 461.54C60.86 461.54 60.68 461.67 60.63 461.86L58.61 470.15C58.58 470.29 58.62 470.44 58.74 470.54C58.82 470.61 58.94 470.65 59.05 470.65C59.09 470.65 59.13 470.65 59.17 470.64L63.25 469.63L61.27 477.74C61.22 477.96 61.35 478.17 61.57 478.24C61.62 478.25 61.67 478.26 61.71 478.26C61.9 478.26 62.06 478.16 62.14 478.01L67.56 466.38C67.63 466.23 67.6 466.06 67.49 465.94Z"/><path d="M33.04 497.26L28.86 497.26C28.47 497.26 27.96 497.43 27.57 497.66L27.57 494.36C27.57 493.83 27.14 493.4 26.61 493.4L22.43 493.4C21.9 493.4 21.15 493.71 20.78 494.08L16.68 498.18C16.31 498.55 16 499.3 16 499.83L16 506.58C16 507.11 16.43 507.54 16.96 507.54L22.43 507.54L22.43 510.44C22.43 510.97 22.86 511.4 23.39 511.4L33.04 511.4C33.57 511.4 34 510.97 34 510.44L34 498.22C34 497.69 33.57 497.26 33.04 497.26ZM27.57 499.4L27.57 502.4L24.57 502.4ZM21.14 495.54L21.14 498.54L18.14 498.54ZM23.11 502.04C22.74 502.41 22.43 503.15 22.43 503.69L22.43 506.26L17.29 506.26L17.29 499.83L21.46 499.83C22 499.83 22.43 499.4 22.43 498.86L22.43 494.69L26.29 494.69L26.29 498.86ZM32.71 510.11L23.71 510.11L23.71 503.69L27.89 503.69C28.43 503.69 28.86 503.25 28.86 502.72L28.86 498.54L32.71 498.54Z"/><path d="M53.81 510.11L53.81 498.54L57.67 498.54L57.67 502.72C57.67 503.25 58.1 503.69 58.64 503.69L62.81 503.69L62.81 510.11ZM56.39 495.65C56.39 495.82 56.24 495.97 56.06 495.97L48.99 495.97C48.82 495.97 48.67 495.82 48.67 495.65L48.67 495.01C48.67 494.84 48.82 494.69 48.99 494.69L56.06 494.69C56.24 494.69 56.39 494.84 56.39 495.01L56.39 495.65ZM58.96 502.4L58.96 499.4L61.96 502.4ZM64.1 503.69C64.1 503.15 63.8 502.42 63.42 502.04L59.32 497.94C59.21 497.83 59.09 497.74 58.96 497.66L58.96 494.36C58.96 493.83 58.53 493.4 57.99 493.4L47.06 493.4C46.53 493.4 46.1 493.83 46.1 494.36L46.1 507.86C46.1 508.4 46.53 508.83 47.06 508.83L52.53 508.83L52.53 510.44C52.53 510.97 52.96 511.4 53.49 511.4L63.14 511.4C63.67 511.4 64.1 510.97 64.1 510.44Z"/><path d="M142.33 493.5C141.84 493.5 141.38 493.72 141.03 494.04L134.62 499.86C134.03 500.4 133.69 501.18 133.69 501.99C133.69 503.68 135.08 505.12 136.78 505.12C137.63 505.12 138.35 504.78 138.97 504.21C140.22 503.05 142.85 498.14 143.64 496.65C143.88 496.18 144.09 495.67 144.09 495.14C144.09 494.18 143.25 493.5 142.33 493.5ZM133.2 503.89C130.94 503.99 129.61 504.39 128.75 506.62C128.66 506.85 128.45 506.99 128.2 506.99C127.78 506.99 126.48 505.96 126.11 505.7C126.11 508.79 127.59 511.5 130.99 511.5C133.86 511.5 135.85 509.53 135.79 506.67L135.78 505.96C134.68 505.66 133.72 504.9 133.2 503.89Z"/><path d="M171.17 508.02C171.17 508.2 171.03 508.34 170.85 508.34L170.21 508.34C170.03 508.34 169.89 508.2 169.89 508.02L169.89 500.95C169.89 500.77 170.03 500.63 170.21 500.63L170.85 500.63C171.03 500.63 171.17 500.77 171.17 500.95L171.17 508.02ZM173.74 508.02C173.74 508.2 173.6 508.34 173.42 508.34L172.78 508.34C172.6 508.34 172.46 508.2 172.46 508.02L172.46 500.95C172.46 500.77 172.6 500.63 172.78 500.63L173.42 500.63C173.6 500.63 173.74 500.77 173.74 500.95L173.74 508.02ZM176.31 508.02C176.31 508.2 176.17 508.34 175.99 508.34L175.35 508.34C175.17 508.34 175.03 508.2 175.03 508.02L175.03 500.95C175.03 500.77 175.17 500.63 175.35 500.63L175.99 500.63C176.17 500.63 176.31 500.77 176.31 500.95L176.31 508.02ZM170.85 498.06L171.34 496.88C171.37 496.84 171.45 496.78 171.51 496.77L174.7 496.77C174.75 496.78 174.84 496.84 174.87 496.88L175.35 498.06ZM180.17 498.38C180.17 498.2 180.03 498.06 179.85 498.06L176.75 498.06L176.04 496.38C175.84 495.89 175.24 495.49 174.71 495.49L171.49 495.49C170.96 495.49 170.36 495.89 170.16 496.38L169.45 498.06L166.35 498.06C166.17 498.06 166.03 498.2 166.03 498.38L166.03 499.02C166.03 499.2 166.17 499.34 166.35 499.34L167.31 499.34L167.31 508.91C167.31 510.01 168.04 510.91 168.92 510.91L177.28 510.91C178.16 510.91 178.89 509.97 178.89 508.87L178.89 499.34L179.85 499.34C180.03 499.34 180.17 499.2 180.17 499.02Z"/></g>
<!-- drop -->
<use href="#drop" transform="translate(-55.47 385.12) scale(0.870)" style="color:#ad9897;--dhl:#f9fafb;--dbg:#f9fafb"/>
<!-- enable false -->
<g fill="#c8d6d7"><path d="M101.14 465.21C101.04 465.12 100.92 465.05 100.78 465.05C100.74 465.05 100.7 465.07 100.66 465.08L96.55 466.09L98.32 461.29C98.36 461.22 98.38 461.16 98.38 461.1C98.38 460.86 98.17 460.66 97.91 460.66L97.91 460.66L94.5 460.66C94.29 460.66 94.1 460.8 94.05 461L91.96 469.56C91.93 469.7 91.97 469.86 92.1 469.96C92.18 470.04 92.3 470.08 92.42 470.08C92.46 470.08 92.5 470.08 92.54 470.07L96.76 469.02L94.71 477.41C94.66 477.62 94.79 477.84 95.02 477.91C95.08 477.93 95.13 477.94 95.17 477.94C95.36 477.94 95.52 477.83 95.6 477.68L101.21 465.67C101.28 465.51 101.25 465.34 101.14 465.21Z"/><path d="M88.400 460.900L104 476.400" stroke="#f9fafb" stroke-width="1.400" fill="none"/><path d="M87.300 461.800L102.900 477.300" stroke="#c8d6d7" stroke-width="1" fill="none"/></g>
<!-- templates -->
<g fill="#004849" stroke="#004849" stroke-width=".8" stroke-linecap="round">
<rect x="196.700" y="460.700" width="8.300" height="2.900" rx=".5"/><rect x="205.400" y="467.600" width="8.300" height="3" rx=".5"/><path d="M200.500 464l9 3.400" fill="none"/>
<rect x="226.500" y="460.700" width="8.300" height="2.900" rx=".5"/><rect x="235.600" y="467.600" width="8.300" height="3" rx=".5"/><path d="M230.500 464l9 3.400" fill="none"/>
<g stroke="none"><path d="M198.21 477.64L198.21 475.46L202.59 475.46L202.59 477.64ZM203.31 477.64L203.31 475.27C203.31 474.97 203.07 474.73 202.77 474.73L198.03 474.73C197.73 474.73 197.49 474.97 197.49 475.27L197.49 477.64L196.76 477.64L196.76 470.36L197.49 470.36L197.49 472.73C197.49 473.03 197.73 473.27 198.03 473.27L201.31 473.27C201.61 473.27 201.86 473.03 201.86 472.73L201.86 470.36C201.97 470.36 202.19 470.45 202.27 470.53L203.87 472.13C203.95 472.2 204.04 472.43 204.04 472.54L204.04 477.64ZM201.13 472.36C201.13 472.46 201.04 472.54 200.95 472.54L199.85 472.54C199.76 472.54 199.67 472.46 199.67 472.36L199.67 470.54C199.67 470.44 199.76 470.36 199.85 470.36L200.95 470.36C201.04 470.36 201.13 470.44 201.13 470.54L201.13 472.36ZM204.77 472.54C204.77 472.24 204.6 471.83 204.38 471.61L202.79 470.02C202.57 469.8 202.16 469.63 201.86 469.63L196.58 469.63C196.27 469.63 196.03 469.87 196.03 470.18L196.03 477.82C196.03 478.13 196.27 478.37 196.58 478.37L204.22 478.37C204.53 478.37 204.77 478.13 204.77 477.82Z"/><path d="M231.200 469.200l4.900 4.900h-2.600v2.500h-4.600v-2.500h-2.600zM226 477.100h10.300v1.200H226z"/></g></g>
<!-- group -->
<g transform="translate(-86.60 486.81) scale(0.545)" fill="none" stroke="#c8d6d7"><use href="#pgframe"/><rect x="326.500" y="21.300" width="9.600" height="9.600" rx="2.400" stroke-width="1.600"/><rect x="331.800" y="26.500" width="9.600" height="9.600" rx="2.400" stroke-width="1.600" fill="#f9fafb"/></g>
</svg>
</div></div>
<div id="crumbs"><span>NiFi Flow</span></div>
<div class="abs" style="left:0;top:675px;width:5px;height:5px;z-index:20;background:radial-gradient(circle at 5px 0,transparent 4.400px,#9a9a9a 5.200px)"></div>
<div class="abs" style="left:1155px;top:675px;width:5px;height:5px;z-index:20;background:radial-gradient(circle at 0 0,transparent 4.400px,#9a9a9a 5.200px)"></div>
</div></body>
</html>
